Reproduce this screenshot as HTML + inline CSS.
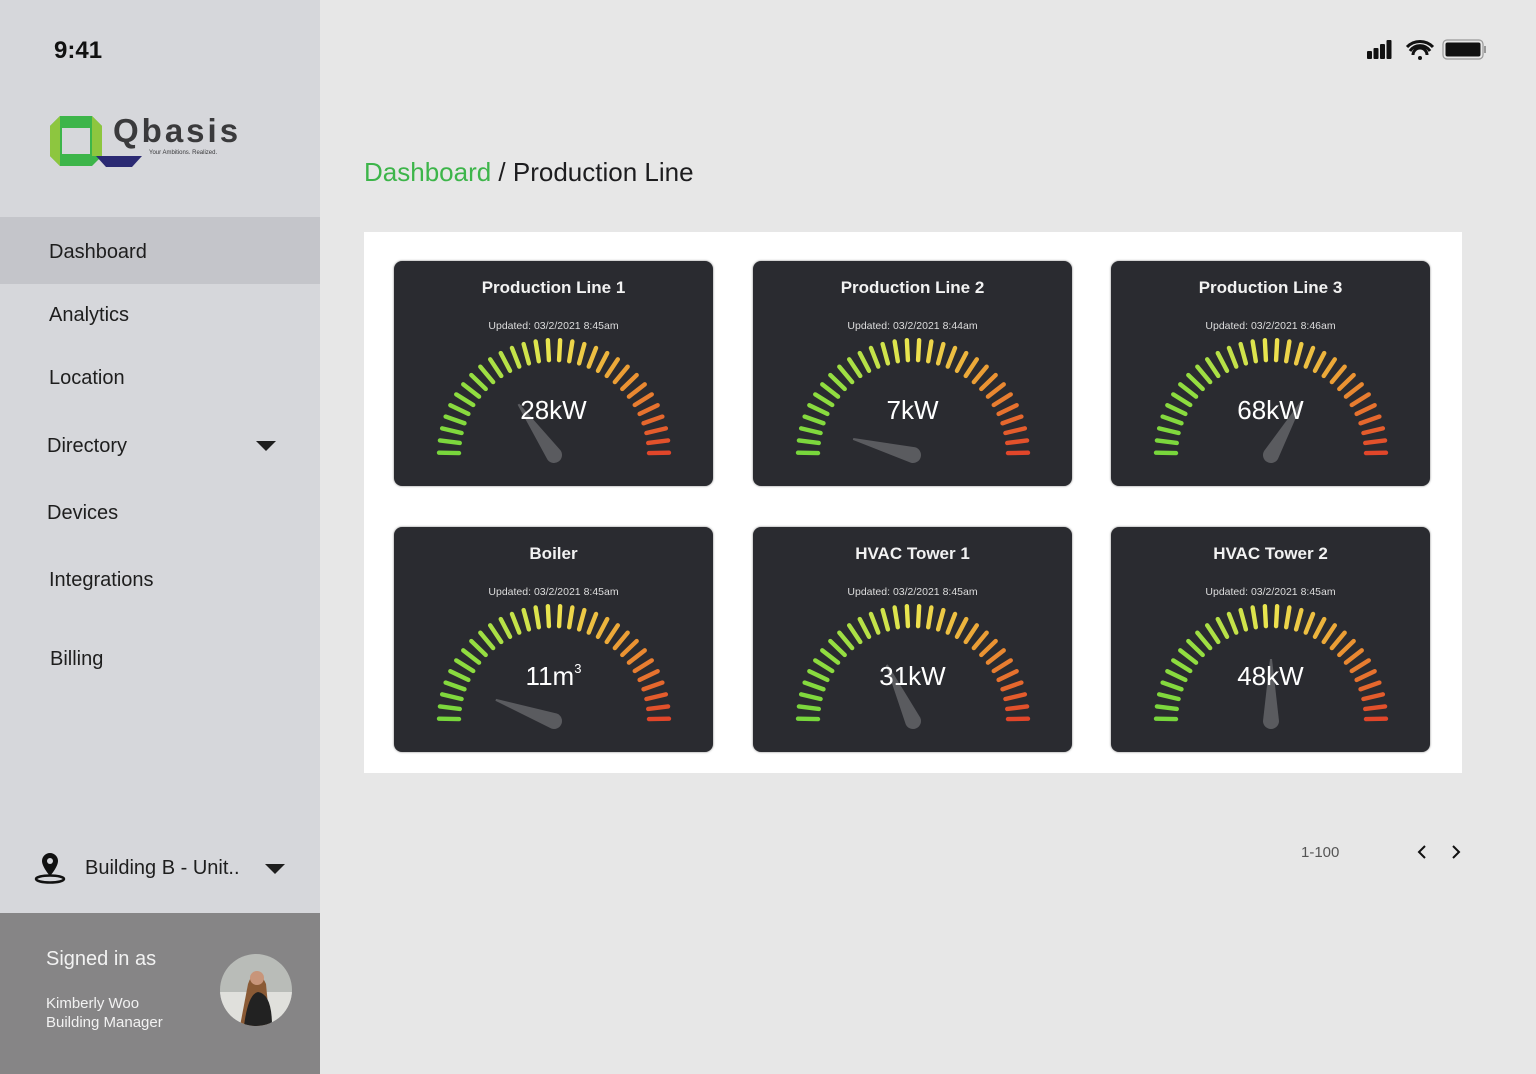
<!DOCTYPE html>
<html><head><meta charset="utf-8"><style>
*{margin:0;padding:0;box-sizing:border-box}
body{width:1536px;height:1074px;background:#e7e7e7;font-family:"Liberation Sans",sans-serif;position:relative;overflow:hidden;color:#1d1d1f}
.sb{position:absolute;left:0;top:0;width:320px;height:1074px;background:#d6d7db}
.abs{position:absolute}
.nav{position:absolute;font-size:20px;color:#1e1e1e}
.card{position:absolute;width:319px;height:225px;background:#2a2b30;border-radius:8px;box-shadow:0 0 2px rgba(0,0,0,.5)}
.card h3{position:absolute;top:17px;width:100%;text-align:center;color:#f2f2f2;font-size:17px;font-weight:bold}
.card .u{position:absolute;top:59px;width:100%;text-align:center;color:#ddd;font-size:10.5px}
.card svg{position:absolute;left:0;top:0}
.card .v{position:absolute;top:134px;width:100%;text-align:center;color:#fff;font-size:26px}
</style></head><body>
<div class="sb"></div>
<div class="abs" style="left:0;top:217px;width:320px;height:67px;background:#c4c5ca"></div>
<div class="abs" style="left:0;top:913px;width:320px;height:161px;background:#868586"></div>
<div class="abs" style="left:54px;top:37px;font-size:24px;font-weight:bold;color:#111">9:41</div>
<svg class="abs" style="left:48px;top:112px" width="200" height="60">
<polygon points="12,4 44,4 54,14 54,44 44,54 12,54 2,44 2,14" fill="#3db54a"/>
<polygon points="2,14 12,4 12,54 2,44" fill="#8dc63f"/>
<polygon points="44,4 54,14 54,44 44,44" fill="#8dc63f"/>
<rect x="14" y="16" width="28" height="26" fill="#d6d7db"/>
<polygon points="48,44 94,44 84,55 58,55" fill="#2b2a73"/>
<text x="65" y="30" font-family="Liberation Sans" font-weight="bold" font-size="33" fill="#3a3a3c" letter-spacing="3">Qbasis</text>
<text x="101" y="42" font-family="Liberation Sans" font-size="6" fill="#3a3a3c">Your Ambitions. Realized.</text>
</svg>
<div class="nav" style="left:49px;top:241px">Dashboard</div>
<div class="nav" style="left:49px;top:304px">Analytics</div>
<div class="nav" style="left:49px;top:367px">Location</div>
<div class="nav" style="left:47px;top:435px">Directory</div>
<div class="abs" style="left:256px;top:441px;border-left:10px solid transparent;border-right:10px solid transparent;border-top:10px solid #1e1e1e"></div>
<div class="nav" style="left:47px;top:502px">Devices</div>
<div class="nav" style="left:49px;top:569px">Integrations</div>
<div class="nav" style="left:50px;top:648px">Billing</div>
<svg class="abs" style="left:33px;top:851px" width="34" height="34"><path d="M17 2a8 8 0 0 0-8 8c0 6 8 15 8 15s8-9 8-15a8 8 0 0 0-8-8z" fill="#111"/><circle cx="17" cy="10" r="3" fill="#d6d7db"/><ellipse cx="17" cy="28" rx="14" ry="3.5" fill="none" stroke="#111" stroke-width="2.5"/></svg>
<div class="nav" style="left:85px;top:857px">Building B - Unit..</div>
<div class="abs" style="left:265px;top:864px;border-left:10px solid transparent;border-right:10px solid transparent;border-top:10px solid #1e1e1e"></div>
<div class="abs" style="left:46px;top:948px;font-size:20px;color:#f2f2f2">Signed in as</div>
<div class="abs" style="left:46px;top:994px;font-size:15px;color:#f2f2f2;line-height:19px">Kimberly Woo<br>Building Manager</div>
<svg class="abs" style="left:220px;top:954px" width="72" height="72"><defs><clipPath id="cp"><circle cx="36" cy="36" r="36"/></clipPath></defs><g clip-path="url(#cp)"><rect width="72" height="72" fill="#b9bcb8"/><rect y="38" width="72" height="34" fill="#e0e0dc"/><path d="M28 30 q8-22 18 0 l4 42 h-30z" fill="#8a5a35"/><path d="M24 72 q4-32 14-34 q14 2 14 34z" fill="#222"/><circle cx="37" cy="24" r="7" fill="#c8957a"/></g></svg>
<svg class="abs" style="left:1366px;top:38px" width="122" height="24">
<rect x="1" y="13" width="5" height="8" rx="1" fill="#111"/><rect x="7.5" y="10" width="5" height="11" rx="1" fill="#111"/><rect x="14" y="6" width="5" height="15" rx="1" fill="#111"/><rect x="20.5" y="2" width="5" height="19" rx="1" fill="#111"/>
<path d="M41 9a18 18 0 0 1 26 0M44 13a12 12 0 0 1 20 0M47 17a6 6 0 0 1 14 0" stroke="#111" stroke-width="3" fill="none"/><circle cx="54" cy="20" r="2" fill="#111"/>
<rect x="77" y="2" width="40" height="19" rx="4" fill="none" stroke="#999" stroke-width="1.2"/><rect x="79.5" y="4.5" width="35" height="14" rx="2" fill="#111"/><rect x="118" y="8" width="2" height="7" fill="#999"/>
</svg>
<div class="abs" style="left:364px;top:157px;font-size:26px"><span style="color:#3db54a">Dashboard</span> / Production Line</div>
<div class="abs" style="left:364px;top:232px;width:1098px;height:541px;background:#fff"></div>
<div id="cards"></div>
<div class="abs" style="left:1301px;top:844px;font-size:15px;color:#555">1-100</div>
<svg class="abs" style="left:1412px;top:842px" width="56" height="20"><path d="M13 4l-6 6 6 6M41 4l6 6-6 6" stroke="#111" stroke-width="2" fill="none"/></svg>
<script>
var data=[[394,261,"Production Line 1","8:45am","28kW",-35],[753,261,"Production Line 2","8:44am","7kW",-75],[1111,261,"Production Line 3","8:46am","68kW",30],
[394,527,"Boiler","8:45am","11m<sup style='font-size:13px;vertical-align:12px'>3</sup>",-70],[753,527,"HVAC Tower 1","8:45am","31kW",-25],[1111,527,"HVAC Tower 2","8:45am","48kW",0]];
function col(t){var s=[[120,214,60],[150,222,65],[238,230,80],[235,150,50],[225,70,42]];var f=t*4,i=Math.min(3,Math.floor(f)),r=f-i;var a=s[i],b=s[i+1];return"rgb("+a.map((v,k)=>Math.round(v+(b[k]-v)*r)).join(",")+")"}
var h="";data.forEach(function(d){var s='<svg width="319" height="225">';var cx=160,cy=194,N=30;
for(var i=0;i<N;i++){var t=i/(N-1),a=Math.PI*(1-t)-0.02*(1-2*t);var r1=95,r2=115,c=Math.cos(a),sn=Math.sin(a);
s+='<line x1="'+(cx+r1*c)+'" y1="'+(cy-r1*sn)+'" x2="'+(cx+r2*c)+'" y2="'+(cy-r2*sn)+'" stroke="'+col(t)+'" stroke-width="4.4" stroke-linecap="round"/>';}
s+='<g transform="translate('+cx+','+cy+') rotate('+d[5]+')"><path d="M-8,0 L-1,-62 L1,-62 L8,0 A8,8 0 0 1 -8,0z" fill="#5a5b5f"/></g></svg>';
h+='<div class="card" style="left:'+d[0]+'px;top:'+d[1]+'px">'+s+'<h3>'+d[2]+'</h3><div class="u">Updated: 03/2/2021 '+d[3]+'</div><div class="v">'+d[4]+'</div></div>';});
document.getElementById("cards").innerHTML=h;
</script>
</body></html>
